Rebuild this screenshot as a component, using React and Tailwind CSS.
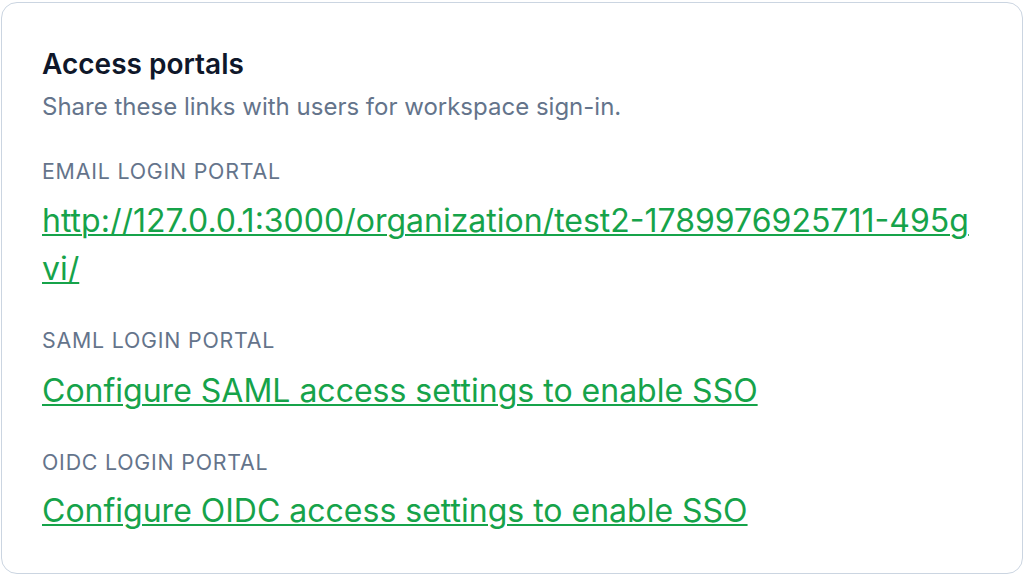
export default function App() {
  const font = { fontFamily: "Inter, 'Noto Sans', sans-serif" };
  return (
    <div className="w-[1024px] h-[576px] bg-white pt-[2px] pl-[1px]" style={font}>
      <div className="w-[1022px] h-[572px] rounded-2xl border border-[#cbd5e1] bg-white pl-10 pr-[44px] pt-[43px] flex flex-col">
        <h2 className="text-[28px] leading-[36px] font-semibold text-[#0f172a]">Access portals</h2>
        <p className="mt-[9px] text-[24px] leading-[32px] text-[#64748b]">Share these links with users for workspace sign-in.</p>

        <div className="mt-[34px] text-[21.33px] leading-[28px] tracking-[0.8px] text-[#64748b] uppercase">Email login portal</div>
        <a href="#" className="mt-[12px] text-[32px] leading-[48px] text-[#16a34a] underline underline-offset-[2px] decoration-2 break-all">
          http://127.0.0.1:3000/organization/test2-1789976925711-495gvi/
        </a>

        <div className="mt-[33px] text-[21.33px] leading-[28px] tracking-[0.8px] text-[#64748b] uppercase">SAML login portal</div>
        <a href="#" className="mt-[13px] text-[32px] leading-[48px] text-[#16a34a] underline underline-offset-[2px] decoration-2">
          Configure SAML access settings to enable SSO
        </a>

        <div className="mt-[33px] text-[21.33px] leading-[28px] tracking-[0.8px] text-[#64748b] uppercase">OIDC login portal</div>
        <a href="#" className="mt-[11px] text-[32px] leading-[48px] text-[#16a34a] underline underline-offset-[2px] decoration-2">
          Configure OIDC access settings to enable SSO
        </a>
      </div>
    </div>
  );
}
